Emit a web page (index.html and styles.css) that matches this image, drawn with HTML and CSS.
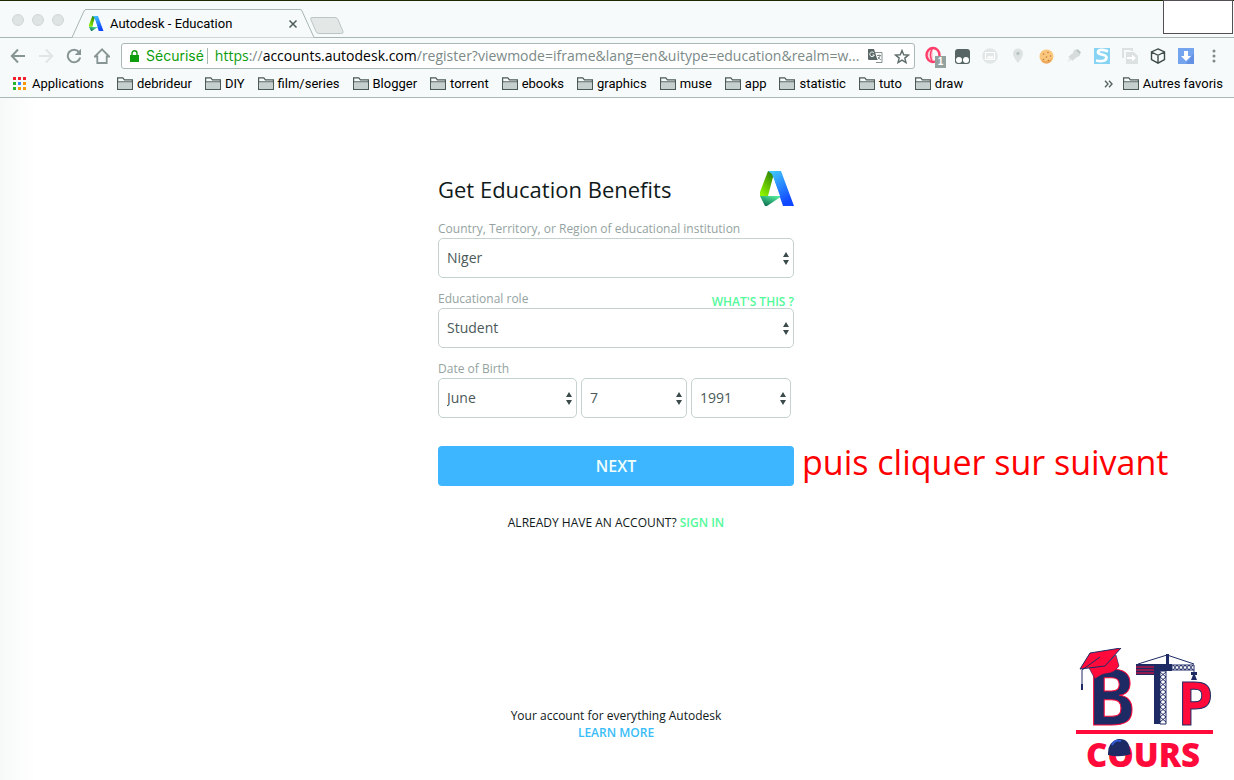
FILE: index.html
```html
<!DOCTYPE html>
<html lang="fr">
<head>
    <meta charset="UTF-8">
    <meta name="viewport" content="width=device-width, initial-scale=1.0">
    <title>Autodesk - Education</title>
    <link rel="stylesheet" href="styles.css">
</head>
<body>
    <!-- shared icons -->
    <svg class="defs" aria-hidden="true">
        <defs>
            <linearGradient id="green" x1="0.8" y1="0" x2="0.2" y2="1">
                <stop offset="0" stop-color="#2c7d00"/>
                <stop offset="1" stop-color="#8df500"/>
            </linearGradient>
            <linearGradient id="teal" x1="1" y1="0" x2="0.2" y2="1">
                <stop offset="0" stop-color="#5dffa6"/>
                <stop offset="1" stop-color="#0b6b50"/>
            </linearGradient>
            <linearGradient id="blue" x1="0" y1="0" x2="0.5" y2="1">
                <stop offset="0" stop-color="#46d0ff"/>
                <stop offset="1" stop-color="#1048ff"/>
            </linearGradient>
            <symbol id="autodesk" viewBox="0 0 35 35">
                <path d="M9 0h7L10 25H1v-4z" fill="url(#green)"/>
                <path d="M1 25h22L8 35H6z" fill="url(#teal)"/>
                <path d="M9 0h13L35 35H24L13 3z" fill="url(#blue)"/>
                <path d="M14 6L21 25H9z" fill="#fff"/>
            </symbol>
            <symbol id="folder" viewBox="0 0 16 13">
                <path d="M.6 12.4V.8h5.2l1.6 2h8v9.6z" fill="#f7fafa" stroke="#4b5957" stroke-width="1.2"/>
                <path d="M1.4 5.4h13.4v6.4H1.4z" fill="#c5d0ce"/>
                <path d="M1 4.8h14" stroke="#4b5957"/>
            </symbol>
            <symbol id="arrows" viewBox="0 0 6 13">
                <path d="M0 5L3 0l3 5zM0 8h6l-3 5z" fill="#3b4a4a"/>
            </symbol>
        </defs>
    </svg>

    <header class="browser">
        <div class="tabs">
            <div class="lights"><i></i><i></i><i></i></div>
            <div class="tab">
                <svg class="tab-shape" width="244" height="29" viewBox="0 0 244 29"><path d="M0 28.5L12 2q.8-1.5 2-1.5h214q1.500 0 2 1.500L242 28.500" fill="#f7fafa" stroke="#a7b5b3"/></svg>
                <svg class="tab-icon" width="16" height="15"><use href="#autodesk"/></svg>
                <span class="tab-title">Autodesk - Education</span>
                <button class="icon-btn" aria-label="Fermer"><svg width="10" height="10" viewBox="0 0 10 10"><path d="M1.500 1.500l7 7M8.500 1.500l-7 7" stroke="#4d5b5a" stroke-width="1.500"/></svg></button>
            </div>
            <button class="icon-btn new-tab" aria-label="Nouvel onglet"><svg width="34" height="17" viewBox="0 0 34 17"><path d="M2 .5h23q2 0 3 2l5 12q.5 2-1.500 2H9q-2 0-3-2L.8 2.500Q.2.5 2 .5z" fill="#e3e8e7" stroke="#bac6c4"/></svg></button>
        </div>

        <div class="toolbar">
            <nav class="nav">
                <button class="icon-btn" aria-label="Précédent"><svg width="16" height="16" viewBox="0 0 16 16" fill="none" stroke="#879694" stroke-width="2"><path d="M15 8H2.500M8 1.500L1.800 8 8 14.500"/></svg></button>
                <button class="icon-btn" aria-label="Suivant"><svg width="16" height="16" viewBox="0 0 16 16" fill="none" stroke="#e0e6e5" stroke-width="2"><path d="M1 8h12.500M8 1.500L14.200 8 8 14.500"/></svg></button>
                <button class="icon-btn" aria-label="Actualiser"><svg width="16" height="16" viewBox="0 0 16 16"><path d="M13 4A6.300 6.300 0 1 0 14.200 9.500" fill="none" stroke="#879694" stroke-width="2"/><path d="M15 .8V7H8.800z" fill="#879694"/></svg></button>
                <button class="icon-btn" aria-label="Accueil"><svg width="16" height="16" viewBox="1 0 16 16"><path d="M9 1.300L1.800 8.500h2.500v6.500h9.400V8.500h2.500z" fill="none" stroke="#879694" stroke-width="1.800"/></svg></button>
            </nav>
            <div class="omnibox">
                <svg class="lock" width="9" height="12" viewBox="0 0 9 12"><path d="M0 5h9v7H0z" fill="#0d9d0d"/><path d="M2 5V3.300a2.500 2.500 0 0 1 5 0V5" fill="none" stroke="#0d9d0d" stroke-width="1.400"/></svg>
                <span class="secure">Sécurisé</span>
                <div class="url"><span class="green">https</span>://<span class="host">accounts.autodesk.com</span>/register?viewmode=iframe&amp;lang=en&amp;uitype=education&amp;realm=w...</div>
                <button class="icon-btn" aria-label="Traduire"><svg width="15" height="14" viewBox="0 0 15 14"><path d="M6 3.500h8v10H8" fill="#fff" stroke="#84918f"/><path d="M0 0h6l3.500 11H1q-1 0-1-1z" fill="#5a6967"/><path d="M6 4A2.300 2.300 0 1 0 6.300 6H4.500" fill="none" stroke="#fff"/><path d="M9 6.500h4M11 5.500v1M12.300 6.500q-.8 2.500-2.800 4M10 8l2.800 3" fill="none" stroke="#74827f" stroke-width=".9"/></svg></button>
                <button class="icon-btn" aria-label="Ajouter aux favoris"><svg width="16" height="15" viewBox="0 0 16 15"><path d="M8 1.500l1.700 4.300 4.700.3-3.600 3 1.200 4.500L8 11.100l-4 2.500 1.200-4.500-3.600-3 4.700-.3z" fill="#fff" stroke="#5d6c6a" stroke-width="1.400"/></svg></button>
            </div>
            <div class="extensions">
                <button class="icon-btn ext" aria-label="Bloqueur"><svg width="20" height="20" viewBox="0 0 20 20"><path d="M9 2A6 7 0 0 0 9 16V2z" fill="#fbd4dd"/><ellipse cx="9" cy="9" rx="6.500" ry="7" fill="none" stroke="#ff3e6b" stroke-width="2.400"/><path d="M8 3Q5 9 8 15" fill="none" stroke="#ff3e6b" stroke-width="1.500"/></svg><span class="badge">1</span></button>
                <button class="icon-btn ext" aria-label="Tampermonkey"><svg width="15" height="15" viewBox="0 0 15 15"><rect width="15" height="15" rx="3" fill="#566563"/><circle cx="4" cy="11" r="3" fill="#fff"/><circle cx="11" cy="11" r="3" fill="#fff"/></svg></button>
                <button class="icon-btn ext" aria-label="Images"><svg width="16" height="16" viewBox="0 0 16 16"><circle cx="8" cy="8" r="7.800" fill="#e1e7e6"/><path d="M3.500 4.500h9v7h-9z" fill="#e1e7e6" stroke="#fff" stroke-width="1.200"/><path d="M4.500 10.500L7 7.500l1.500 1.500L10 7.500l2 3z" fill="#fff"/></svg></button>
                <button class="icon-btn ext" aria-label="Lieu"><svg width="12" height="16" viewBox="0 0 12 16"><path d="M6 15Q1 9 1 5.500a5 5 0 0 1 10 0Q11 9 6 15z" fill="#dde3e2"/><circle cx="6" cy="5.500" r="1.700" fill="#b9c3c1"/></svg></button>
                <button class="icon-btn ext" aria-label="Cookies"><svg width="15" height="15" viewBox="0 0 15 15"><circle cx="7.500" cy="7.500" r="7" fill="#f9c67c"/><path d="M2 10q5 5 11-1-1 5.500-5.500 5.500T2 10z" fill="#eda75a"/><g fill="#c07c3e"><circle cx="4.500" cy="5" r=".8"/><circle cx="9" cy="3.500" r=".8"/><circle cx="7.500" cy="8" r=".8"/><circle cx="11.500" cy="7" r=".8"/><circle cx="4.500" cy="10.500" r=".8"/><circle cx="9.500" cy="11.500" r=".8"/></g></svg></button>
                <button class="icon-btn ext" aria-label="Fusée"><svg width="16" height="16" viewBox="0 0 16 16"><path d="M12 1l3 3-1.500 4-2.500 1L6 13l-1-2-3.500 3.500L4 10 2 9l5-4 1-3z" fill="#d5dcda"/><path d="M11 2l3 3" stroke="#b3bebc" stroke-width="1.500"/></svg></button>
                <button class="icon-btn ext" aria-label="Stylish"><svg width="16" height="16" viewBox="0 0 16 16"><path d="M0 0h16v16H0z" fill="#86d3f3"/><path d="M14 3.300q-9-3-10 .7c-.7 3 9 2 8.500 5.500Q12 14.500 2 12.500" fill="none" stroke="#fff" stroke-width="2.800"/></svg></button>
                <button class="icon-btn ext" aria-label="Copier"><svg width="16" height="16" viewBox="0 0 16 16"><path d="M1 10V1h9v2" fill="none" stroke="#dce2e1" stroke-width="2"/><path d="M4 4h8l4 4v8H4z" fill="#dce2e1"/><path d="M5 9h5V6.500L14 10l-4 3.500V11H5z" fill="#fff"/></svg></button>
                <button class="icon-btn ext" aria-label="Cube"><svg width="16" height="16" viewBox="0 0 16 16"><path d="M8 .9l6.500 3v7.700L8 15.200l-6.500-3.600V3.900zM1.500 4L8 7.300 14.500 4M8 7.300v7.500" fill="none" stroke="#3d4a49" stroke-width="1.400"/></svg></button>
                <button class="icon-btn ext" aria-label="Télécharger"><svg width="16" height="16" viewBox="0 0 16 16"><path d="M0 0h16v16H0z" fill="#75a4ef"/><path d="M16 5v11H8z" fill="#6391e3"/><path d="M6 3h4v5h3l-5 5-5-5h3z" fill="#fff"/></svg></button>
                <button class="icon-btn ext" aria-label="Menu"><svg width="4" height="14" viewBox="0 0 4 14" fill="#7c8a88"><circle cx="2" cy="2" r="1.500"/><circle cx="2" cy="7" r="1.500"/><circle cx="2" cy="12" r="1.500"/></svg></button>
            </div>
        </div>

        <nav class="bookmarks">
            <a href="#"><svg width="15" height="14" viewBox="0 0 15 14"><path d="M0 0h3v3H0zM5 0h3v3H5zM10 0h3v3h-3z" fill="#f5202c"/><path d="M0 5h3v3H0zM0 10h3v3H0z" fill="#28b52c"/><path d="M5 5h3v3H5z" fill="#3a86ff"/><path d="M10 5h3v3h-3zM5 10h3v3H5zM10 10h3v3h-3z" fill="#f9980b"/></svg>Applications</a>
            <a href="#"><svg width="16" height="13"><use href="#folder"/></svg>debrideur</a>
            <a href="#"><svg width="16" height="13"><use href="#folder"/></svg>DIY</a>
            <a href="#"><svg width="16" height="13"><use href="#folder"/></svg>film/series</a>
            <a href="#"><svg width="16" height="13"><use href="#folder"/></svg>Blogger</a>
            <a href="#"><svg width="16" height="13"><use href="#folder"/></svg>torrent</a>
            <a href="#"><svg width="16" height="13"><use href="#folder"/></svg>ebooks</a>
            <a href="#"><svg width="16" height="13"><use href="#folder"/></svg>graphics</a>
            <a href="#"><svg width="16" height="13"><use href="#folder"/></svg>muse</a>
            <a href="#"><svg width="16" height="13"><use href="#folder"/></svg>app</a>
            <a href="#"><svg width="16" height="13"><use href="#folder"/></svg>statistic</a>
            <a href="#"><svg width="16" height="13"><use href="#folder"/></svg>tuto</a>
            <a href="#"><svg width="16" height="13"><use href="#folder"/></svg>draw</a>
            <button class="icon-btn more" aria-label="Plus de favoris"><svg width="13" height="8" viewBox="0 0 13 8"><path d="M4 .8L7 4 4 7.200M8 .8L11 4 8 7.200" fill="none" stroke="#566563" stroke-width="1.400"/></svg></button>
            <a href="#"><svg width="16" height="13"><use href="#folder"/></svg>Autres favoris</a>
        </nav>
        <div class="blank-box"></div>
    </header>

    <main class="page">
        <form class="signup">
            <div class="signup-head">
                <h1>Get Education Benefits</h1>
                <svg width="35" height="35"><use href="#autodesk"/></svg>
            </div>

            <div class="field">
                <div class="label-row"><label for="country">Country, Territory, or Region of educational institution</label></div>
                <div class="select">
                    <select id="country"><option>Niger</option></select>
                    <svg width="6" height="13"><use href="#arrows"/></svg>
                </div>
            </div>

            <div class="field">
                <div class="label-row">
                    <label for="role">Educational role</label>
                    <a class="help" href="#">WHAT'S THIS ?</a>
                </div>
                <div class="select">
                    <select id="role"><option>Student</option></select>
                    <svg width="6" height="13"><use href="#arrows"/></svg>
                </div>
            </div>

            <div class="field">
                <div class="label-row"><label for="month">Date of Birth</label></div>
                <div class="dates">
                    <div class="select">
                        <select id="month"><option>June</option></select>
                        <svg width="6" height="13"><use href="#arrows"/></svg>
                    </div>
                    <div class="select">
                        <select aria-label="Day"><option>7</option></select>
                        <svg width="6" height="13"><use href="#arrows"/></svg>
                    </div>
                    <div class="select">
                        <select aria-label="Year"><option>1991</option></select>
                        <svg width="6" height="13"><use href="#arrows"/></svg>
                    </div>
                </div>
            </div>

            <div class="submit">
                <button class="next" type="button">NEXT</button>
                <span class="note">puis cliquer sur suivant</span>
            </div>
            <p class="signin">ALREADY HAVE AN ACCOUNT? <a href="#">SIGN IN</a></p>
        </form>

        <footer class="footer">
            <p>Your account for everything Autodesk</p>
            <a href="#">LEARN MORE</a>
        </footer>

        <svg class="btp" width="144" height="130" viewBox="0 0 144 130" role="img" aria-label="BTP Cours">
            <text class="btp-b" x="13" y="77">B</text>
            <!-- graduation cap -->
            <path d="M13 20L29 17 40 7 43 18Q39 24 34 25 26 25 19 31z" fill="#ff0a3a" stroke="#1e2a64" stroke-width=".6"/>
            <path d="M4 21L14 5 45 0 29 18z" fill="#ff0a3a" stroke="#1e2a64"/>
            <path d="M24 9L6 22v15" fill="none" stroke="#1e2a64"/>
            <path d="M5 36h2v6H5z" fill="#1e2a64"/>
            <!-- crane -->
            <path d="M78 16h18v7H84v53h-6z" fill="#1e2a64"/>
            <path d="M60 16h18v11H60z" fill="#1e2a64"/>
            <path d="M60 19h18M60 22h18M60 25h18" stroke="#ff0a3a"/>
            <path d="M84 23h6v53h-6z" fill="#fff" stroke="#1e2a64"/>
            <path d="M84 24l6 5-6 5 6 5-6 5 6 5-6 5 6 5-6 5 6 5-6 5M90 24l-6 5 6 5-6 5 6 5-6 5 6 5-6 5 6 5-6 5 6 5" fill="none" stroke="#1e2a64"/>
            <path d="M96 17h22v5H96z" fill="#fff" stroke="#1e2a64"/>
            <path d="M97 22l4-5 4 5 4-5 4 5 4-5M97 17l4 5 4-5 4 5 4-5 4 5" fill="none" stroke="#1e2a64"/>
            <path d="M62 16L91 7l27 9M118 22v8" fill="none" stroke="#1e2a64"/>
            <path d="M90 6h3v11h-3zM115 24h6v3h-2l2 5h-6l2-5h-2z" fill="#1e2a64"/>
            <text class="btp-p" x="102" y="77">P</text>
            <path d="M0 82h137v4H0z" fill="#ff0a3a"/>
            <text class="btp-cours" x="10" y="119">COURS</text>
            <path d="M32 105q0-11 10-14 12-1 12 13l1 2q-11 4-23 1z" fill="#1e2a64"/>
            <path d="M36 97q3-6 9-4" fill="none" stroke="#315bd5" stroke-width="2"/>
        </svg>
    </main>
</body>
</html>
```
FILE: styles.css
```css
* {
    box-sizing: border-box;
}
body {
    margin: 0;
    min-height: 100vh;
    display: flex;
    flex-direction: column;
    font-family: "Open Sans", "Noto Sans", sans-serif;
    background: #fff;
    overflow-x: hidden;
}
a {
    text-decoration: none;
}
p {
    margin: 0;
}
.defs {
    position: absolute;
    width: 0;
    height: 0;
}
.icon-btn {
    display: flex;
    align-items: center;
    justify-content: center;
    padding: 0;
    border: none;
    background: none;
    cursor: pointer;
}

/* browser bar */
.browser {
    position: relative;
    font-family: Roboto, sans-serif;
    background: #f7fafa;
    border-top: 1px solid #1c2704;
    border-bottom: 1px solid #a9b8b6;
}
.tabs {
    display: flex;
    height: 37px;
    padding-top: 8px;
    padding-left: 12px;
    border-bottom: 1px solid #a7b5b3;
}
.lights {
    display: flex;
    gap: 8px;
    width: 60px;
    padding-top: 5px;
}
.lights i {
    width: 12px;
    height: 12px;
    border-radius: 50%;
    background: #dee4e3;
    border: 1px solid #d0d8d6;
}
.tab {
    position: relative;
    display: flex;
    align-items: center;
    width: 244px;
    height: 29px;
    padding: 0 18px 0 16px;
    gap: 6px;
    font-size: 13px;
}
.tab-shape {
    position: absolute;
    left: 0;
    top: 0;
}
.tab-icon, .tab-title, .tab .icon-btn {
    position: relative;
}
.tab-title {
    flex: 1;
}
.new-tab {
    height: 17px;
    margin-top: 8px;
    margin-left: -6px;
}
.toolbar {
    display: flex;
    align-items: center;
    height: 36px;
    padding: 0 6px 0 10px;
    gap: 5px;
}
.nav {
    display: flex;
    gap: 12px;
    width: 106px;
}
.omnibox {
    flex: 1;
    min-width: 0;
    display: flex;
    align-items: center;
    height: 26px;
    padding: 0 3px 0 8px;
    gap: 7px;
    border: 1px solid #a9b8b6;
    border-radius: 3px;
    background: #fff;
    font-size: 14px;
}
.lock {
    flex-shrink: 0;
}
.secure, .green {
    color: #0d9d0d;
}
.secure {
    padding-right: 3px;
    border-right: 1px solid #a9b8b6;
    font-family: Inter, Roboto, sans-serif;
    line-height: 16px;
}
.url {
    flex: 1;
    font-family: "Open Sans", "Noto Sans", sans-serif;
    line-height: 20px;
    white-space: nowrap;
    color: #7c8a88;
}
.host {
    color: #000;
}
.omnibox .icon-btn {
    width: 20px;
}
.extensions {
    display: flex;
}
.ext {
    position: relative;
    width: 28px;
    height: 22px;
}
.badge {
    position: absolute;
    right: 2px;
    bottom: -1px;
    width: 11px;
    height: 12px;
    background: #93a19f;
    color: #fff;
    font-size: 10px;
    font-weight: bold;
    line-height: 12px;
}
.bookmarks {
    display: flex;
    align-items: center;
    height: 23px;
    padding: 0 11px 4px 13px;
    gap: 13px;
    font-size: 13px;
    white-space: nowrap;
}
.bookmarks a {
    display: flex;
    align-items: center;
    gap: 4px;
    color: #000;
}
.bookmarks .more {
    margin-left: auto;
    margin-right: -4px;
}
.blank-box {
    position: absolute;
    top: -1px;
    right: 1px;
    width: 70px;
    height: 34px;
    background: #fff;
    border: 1px solid #544f55;
}

/* page */
.page {
    position: relative;
    flex: 1;
    display: flex;
    flex-direction: column;
    align-items: center;
    padding: 73px 2px 39px 0;
    background: linear-gradient(to right, #f7f9f9, #fff 36px);
}
.signup {
    width: 356px;
}
.signup-head {
    display: flex;
    align-items: center;
    justify-content: space-between;
    height: 35px;
    margin-bottom: 12px;
}
h1 {
    margin: 0;
    font-size: 22px;
    font-weight: 400;
    color: #101a1a;
}
.field {
    margin-bottom: 10px;
}
.label-row {
    display: flex;
    justify-content: space-between;
    height: 20px;
    font-size: 12px;
    line-height: 22px;
    color: #94a3a1;
}
.help {
    padding-top: 3px;
    font-weight: 600;
    color: #53f99b;
}
.select {
    position: relative;
}
.select select {
    appearance: none;
    display: block;
    width: 100%;
    height: 40px;
    padding: 0 16px 2px 8px;
    border: 1px solid #c5d2cf;
    border-radius: 5px;
    background: #fff;
    font-family: inherit;
    font-size: 14px;
    color: #4b5a59;
}
.select svg {
    position: absolute;
    right: 5px;
    top: 14px;
    pointer-events: none;
}
.dates {
    display: grid;
    grid-template-columns: 139fr 106fr 100fr;
    gap: 4px;
    padding-right: 3px;
}
.submit {
    position: relative;
    margin-top: 28px;
}
.next {
    display: block;
    width: 100%;
    height: 40px;
    border: none;
    border-radius: 4px;
    background: #3db6ff;
    color: #f0fffb;
    font-family: inherit;
    font-size: 16px;
    font-weight: 600;
    cursor: pointer;
}
.note {
    position: absolute;
    left: 100%;
    top: -8px;
    padding-left: 8px;
    font-size: 34px;
    line-height: 48px;
    white-space: nowrap;
    color: #f00;
}
.signin {
    margin-top: 28px;
    text-align: center;
    font-size: 12px;
    line-height: 18px;
    color: #101a1a;
}
.signin a {
    font-weight: 600;
    color: #53f99b;
}
.footer {
    margin-top: auto;
    text-align: center;
    font-size: 12px;
    line-height: 17px;
    color: #101a1a;
}
.footer a {
    display: block;
    font-weight: 600;
    color: #38bdf8;
}
.btp {
    position: absolute;
    right: 14px;
    bottom: 2px;
}
.btp-b, .btp-p {
    font-family: "DejaVu Sans Mono", monospace;
    font-weight: bold;
}
.btp-b {
    font-size: 76px;
    fill: #1e2a64;
    stroke: #ff0a3a;
}
.btp-p {
    font-size: 58px;
    fill: #ff0a3a;
    stroke: #1e2a64;
}
.btp-cours {
    font-family: "Open Sans", sans-serif;
    font-size: 33px;
    font-weight: 800;
    fill: #ff0a3a;
}
```
